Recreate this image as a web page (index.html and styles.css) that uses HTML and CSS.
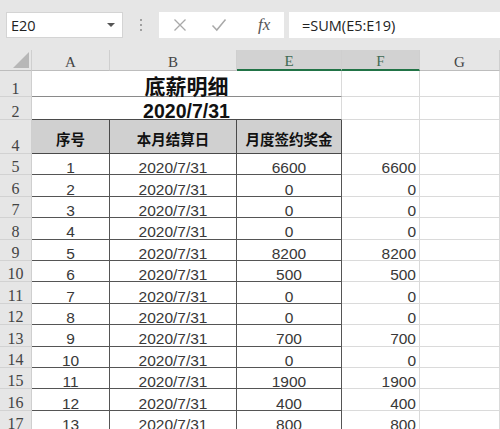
FILE: index.html
```html
<!DOCTYPE html>
<html>
<head>
<meta charset="utf-8">
<link rel="stylesheet" href="styles.css">
</head>
<body>
<div class="toolbar">
  <div class="namebox"><span class="nb-text">E20</span><span class="caret"></span></div>
  <div class="dots"><i></i><i></i><i></i></div>
  <div class="fbtns">
    <svg class="ico" width="14" height="14" viewBox="0 0 14 14"><path d="M1.5 1.5 L12.5 12.5 M12.5 1.5 L1.5 12.5" stroke="#a9a9a9" stroke-width="1.3" fill="none"/></svg>
    <svg class="ico" width="16" height="14" viewBox="0 0 16 14"><path d="M1.5 7.5 L5.8 12 L14.5 1.5" stroke="#a9a9a9" stroke-width="1.5" fill="none"/></svg>
    <span class="fx">fx</span>
  </div>
  <div class="formula">=SUM(E5:E19)</div>
</div>
<div class="sheet">
  <div class="ch corner"><span class="tri"></span></div>
  <div class="ch">A</div>
  <div class="ch">B</div>
  <div class="ch sel">E</div>
  <div class="ch sel">F</div>
  <div class="ch">G</div>

  <div class="rh">1</div>
  <div class="c title">底薪明细</div>
  <div class="c"></div>
  <div class="c"></div>

  <div class="rh">2</div>
  <div class="c date">2020/7/31</div>
  <div class="c"></div>
  <div class="c"></div>

  <div class="rh">4</div>
  <div class="c th">序号</div>
  <div class="c th">本月结算日</div>
  <div class="c th">月度签约奖金</div>
  <div class="c"></div>
  <div class="c"></div>

  <div class="rh">5</div><div class="c t">1</div><div class="c t">2020/7/31</div><div class="c t">6600</div><div class="c r">6600</div><div class="c"></div>
  <div class="rh">6</div><div class="c t">2</div><div class="c t">2020/7/31</div><div class="c t">0</div><div class="c r">0</div><div class="c"></div>
  <div class="rh">7</div><div class="c t">3</div><div class="c t">2020/7/31</div><div class="c t">0</div><div class="c r">0</div><div class="c"></div>
  <div class="rh">8</div><div class="c t">4</div><div class="c t">2020/7/31</div><div class="c t">0</div><div class="c r">0</div><div class="c"></div>
  <div class="rh">9</div><div class="c t">5</div><div class="c t">2020/7/31</div><div class="c t">8200</div><div class="c r">8200</div><div class="c"></div>
  <div class="rh">10</div><div class="c t">6</div><div class="c t">2020/7/31</div><div class="c t">500</div><div class="c r">500</div><div class="c"></div>
  <div class="rh">11</div><div class="c t">7</div><div class="c t">2020/7/31</div><div class="c t">0</div><div class="c r">0</div><div class="c"></div>
  <div class="rh">12</div><div class="c t">8</div><div class="c t">2020/7/31</div><div class="c t">0</div><div class="c r">0</div><div class="c"></div>
  <div class="rh">13</div><div class="c t">9</div><div class="c t">2020/7/31</div><div class="c t">700</div><div class="c r">700</div><div class="c"></div>
  <div class="rh">14</div><div class="c t">10</div><div class="c t">2020/7/31</div><div class="c t">0</div><div class="c r">0</div><div class="c"></div>
  <div class="rh">15</div><div class="c t">11</div><div class="c t">2020/7/31</div><div class="c t">1900</div><div class="c r">1900</div><div class="c"></div>
  <div class="rh">16</div><div class="c t">12</div><div class="c t">2020/7/31</div><div class="c t">400</div><div class="c r">400</div><div class="c"></div>
  <div class="rh">17</div><div class="c t">13</div><div class="c t">2020/7/31</div><div class="c t">800</div><div class="c r">800</div><div class="c"></div>
</div>
</body>
</html>
```
FILE: styles.css
```css
* { box-sizing: border-box; }
html, body { margin: 0; padding: 0; }
body {
  width: 500px;
  height: 429px;
  overflow: hidden;
  background: #ffffff;
  font-family: "Liberation Sans", "Noto Sans CJK SC", sans-serif;
  color: #333;
}
.toolbar {
  height: 50px;
  background: #e6e6e6;
  display: flex;
  align-items: flex-start;
  padding-top: 12px;
  padding-left: 6px;
}
.namebox {
  width: 117px;
  height: 26px;
  background: #fff;
  border: 1px solid #d4d4d4;
  display: flex;
  align-items: center;
  justify-content: space-between;
  padding: 0 7px 0 4px;
}
.nb-text {
  font-family: "Open Sans", "Noto Sans", sans-serif;
  font-size: 14.5px;
  color: #222;
}
.caret {
  width: 0;
  height: 0;
  border-left: 4px solid transparent;
  border-right: 4px solid transparent;
  border-top: 4px solid #555;
}
.dots {
  width: 36px;
  height: 26px;
  display: flex;
  flex-direction: column;
  align-items: center;
  justify-content: center;
  gap: 3px;
}
.dots i {
  display: block;
  width: 2px;
  height: 2px;
  background: #a0a0a0;
}
.fbtns {
  width: 125px;
  height: 26px;
  background: #fff;
  display: flex;
  align-items: center;
  padding-left: 14px;
}
.fbtns .ico { margin-right: 24px; }
.fbtns .ico + .ico { margin-right: 31px; }
.fx {
  font-family: "Liberation Serif", serif;
  font-style: italic;
  font-size: 17px;
  color: #555;
}
.formula {
  flex: 1;
  height: 26px;
  margin-left: 5px;
  background: #fff;
  display: flex;
  align-items: center;
  padding-left: 13px;
  font-family: "Open Sans", "Noto Sans", sans-serif;
  font-size: 14.5px;
  color: #222;
}
.sheet {
  display: grid;
  grid-template-columns: 32px 78px 127px 105px 78px 80px;
  grid-template-rows: 21px 26px 23px 34px repeat(13, 21.4px);
}
.ch {
  background: #e6e6e6;
  border-right: 1px solid #cfcfcf;
  border-bottom: 1px solid #bdbdbd;
  font-family: "Liberation Serif", "DejaVu Serif", serif;
  font-size: 15px;
  line-height: 15px;
  color: #444;
  display: flex;
  align-items: center;
  justify-content: center;
  padding-top: 4px;
}
.ch.sel {
  background: #d2d2d2;
  border-bottom: 2px solid #217346;
  color: #3f6a52;
}
.corner { position: relative; }
.tri {
  position: absolute;
  right: 2px;
  bottom: 2px;
  width: 0;
  height: 0;
  border-left: 16px solid transparent;
  border-bottom: 16px solid #b7b7b7;
}
.rh {
  background: #e6e6e6;
  border-right: 1px solid #cfcfcf;
  border-bottom: 1px solid #d2d2d2;
  font-family: "Liberation Serif", "DejaVu Serif", serif;
  font-size: 16px;
  line-height: 14px;
  color: #444;
  display: flex;
  align-items: flex-end;
  justify-content: center;
  padding-bottom: 0;
}
.c {
  border-right: 1px solid #dadada;
  border-bottom: 1px solid #dadada;
  display: flex;
  align-items: center;
  justify-content: center;
  font-size: 15.5px;
  line-height: 14px;
  color: #383838;
  white-space: nowrap;
}
.title {
  grid-column: 2 / 5;
  border-right-color: #dadada;
  border-bottom: 1px solid #8a8a8a;
  font-family: "Noto Sans CJK SC", sans-serif;
  font-weight: 700;
  font-size: 21px;
  line-height: 22px;
  color: #111;
  padding-top: 2px;
}
.date {
  grid-column: 2 / 5;
  border-bottom: 1px solid #4a4a4a;
  font-weight: 700;
  font-size: 19.5px;
  line-height: 18px;
  color: #111;
  padding-top: 6px;
}
.th {
  background: #d0d0d0;
  border-right: 1px solid #4a4a4a;
  border-bottom: 1px solid #4a4a4a;
  font-family: "Noto Sans CJK SC", sans-serif;
  font-weight: 700;
  font-size: 14.5px;
  line-height: 16px;
  color: #111;
  padding-top: 5px;
}
.t {
  border-right: 1px solid #555;
  border-bottom: 1px solid #555;
  padding-top: 8px;
}
.r {
  justify-content: flex-end;
  padding-right: 3px;
  padding-top: 8px;
}
```
